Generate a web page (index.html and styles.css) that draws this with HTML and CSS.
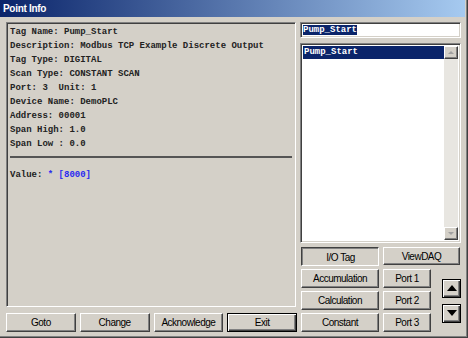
FILE: index.html
```html
<!DOCTYPE html>
<html lang="en">
  <head>
    <meta charset="UTF-8" />
    <title>Point Info</title>
    <link rel="stylesheet" href="styles.css">
  </head>
  <body>
    <div class="window">
      <div class="titlebar">Point Info</div>

      <div class="main">
        <div class="left">
          <div class="info sunken">
            <div class="line">Tag Name: Pump_Start</div>
            <div class="line">Description: Modbus TCP Example Discrete Output</div>
            <div class="line">Tag Type: DIGITAL</div>
            <div class="line">Scan Type: CONSTANT SCAN</div>
            <div class="line">Port: 3&nbsp; Unit: 1</div>
            <div class="line">Device Name: DemoPLC</div>
            <div class="line">Address: 00001</div>
            <div class="line">Span High: 1.0</div>
            <div class="line">Span Low : 0.0</div>
            <div class="rule"></div>
            <div class="line">Value: <span class="value">* [8000]</span></div>
          </div>

          <div class="actions">
            <button class="btn">Goto</button>
            <button class="btn">Change</button>
            <button class="btn">Acknowledge</button>
            <button class="btn default">Exit</button>
          </div>
        </div>

        <div class="right">
          <div class="field sunken"><span class="sel">Pump_Start</span></div>

          <div class="listbox sunken">
            <div class="items">
              <div class="item selected">Pump_Start</div>
            </div>
            <div class="scrollbar">
              <div class="sb-btn"><span class="tri up small"></span></div>
              <div class="sb-track"></div>
              <div class="sb-btn"><span class="tri down small"></span></div>
            </div>
          </div>

          <div class="controls">
            <button class="btn pressed">I/O Tag</button>
            <button class="btn wide">ViewDAQ</button>
            <button class="btn">Accumulation</button>
            <button class="btn">Port 1</button>
            <div class="arrows">
              <button class="btn arrow"><span class="tri up"></span></button>
              <button class="btn arrow"><span class="tri down"></span></button>
            </div>
            <button class="btn">Calculation</button>
            <button class="btn">Port 2</button>
            <button class="btn">Constant</button>
            <button class="btn">Port 3</button>
          </div>
        </div>
      </div>
    </div>
  </body>
</html>
```

FILE: styles.css
```css
:root {
  --face: #d4d0c8;
  --shadow: #808080;
  --dark: #404040;
  --navy: #0a246a;
}

body {
  margin: 0;
  background: var(--face);
}

.window {
  width: 468px;
  height: 338px;
  box-sizing: border-box;
  background: var(--face);
  border-right: 1px solid var(--dark);
  border-bottom: 1px solid var(--dark);
  box-shadow: inset -1px -1px var(--shadow);
  font-family: "Liberation Sans", Arial, sans-serif;
  font-size: 10px;
  letter-spacing: -0.5px;
  color: #000;
}

.titlebar {
  height: 17px;
  width: 465px;
  box-sizing: border-box;
  padding: 2px 0 0 3px;
  background: linear-gradient(to right, #0a246a, #a6caf0);
  color: #fff;
  font-weight: bold;
  font-size: 10px;
  letter-spacing: -0.3px;
  line-height: 13px;
}

.main {
  display: flex;
  gap: 3px;
  padding: 5px 0 0 6px;
}

.sunken {
  box-sizing: border-box;
  border: 1px solid;
  border-color: var(--shadow) #fff #fff var(--shadow);
  box-shadow: inset 1px 1px var(--dark), inset -1px -1px var(--face);
}

/* left side */
.left {
  width: 291px;
  display: flex;
  flex-direction: column;
  gap: 6px;
}

.info {
  width: 290px;
  height: 285px;
  padding: 2px 3px 0 3px;
  font-family: "Liberation Mono", "Courier New", monospace;
  font-size: 9px;
  font-weight: bold;
  letter-spacing: 0;
  color: #222;
}

.line {
  line-height: 14px;
  white-space: pre;
}

.rule {
  height: 0;
  border-top: 2px solid #555;
  margin: 5px 0 10px 0;
}

.value {
  color: #2a2af0;
}

.actions {
  display: grid;
  grid-template-columns: repeat(4, 1fr);
  gap: 4px;
  height: 20px;
}

/* buttons */
.btn {
  box-sizing: border-box;
  margin: 0;
  padding: 0;
  height: 19px;
  background: var(--face);
  font: inherit;
  letter-spacing: inherit;
  color: #000;
  border: 1px solid;
  border-color: #fff var(--dark) var(--dark) #fff;
  box-shadow: inset -1px -1px var(--shadow);
}

.btn.default {
  border: 1px solid #000;
  box-shadow: inset 1px 1px #fff, inset -1px -1px var(--dark), inset -2px -2px var(--shadow);
}

.btn.pressed {
  border-color: var(--dark) #fff #fff var(--dark);
  box-shadow: inset 1px 1px var(--shadow);
  padding: 2px 0 0 1px;
}

/* right side */
.right {
  width: 161px;
  display: flex;
  flex-direction: column;
}

.field {
  height: 16px;
  background: #fff;
  padding: 2px 0 0 2px;
  font-family: "Liberation Mono", "Courier New", monospace;
  font-size: 9px;
  font-weight: bold;
  letter-spacing: 0;
  line-height: 11px;
}

.sel {
  background: var(--navy);
  color: #fff;
}

.listbox {
  margin-top: 5px;
  height: 200px;
  background: #fff;
  display: flex;
  padding: 2px;
}

.items {
  flex: 1;
  font-family: "Liberation Mono", "Courier New", monospace;
  font-size: 9px;
  font-weight: bold;
  letter-spacing: 0;
}

.item {
  height: 13px;
  line-height: 13px;
  padding-left: 1px;
}

.item.selected {
  background: var(--navy);
  color: #fff;
}

.scrollbar {
  width: 14px;
  display: flex;
  flex-direction: column;
  background: #e8e6e1;
}

.sb-track {
  flex: 1;
}

.sb-btn {
  height: 13px;
  box-sizing: border-box;
  background: var(--face);
  border: 1px solid;
  border-color: #fff var(--dark) var(--dark) #fff;
  box-shadow: inset -1px -1px var(--shadow);
  display: flex;
  align-items: center;
  justify-content: center;
}

.tri {
  width: 0;
  height: 0;
  border-left: 5px solid transparent;
  border-right: 5px solid transparent;
}

.tri.up {
  border-bottom: 6px solid #000;
}

.tri.down {
  border-top: 6px solid #000;
}

.tri.small {
  border-left-width: 3px;
  border-right-width: 3px;
  border-bottom-width: 3px;
  border-top-width: 3px;
}

.tri.small.up {
  border-top: 0;
  border-bottom-color: #a0a0a0;
}

.tri.small.down {
  border-bottom: 0;
  border-top-color: #a0a0a0;
}

.controls {
  margin-top: 4px;
  padding-left: 1px;
  display: grid;
  grid-template-columns: 78px 48px 1fr;
  grid-template-rows: repeat(4, 19px);
  column-gap: 4px;
  row-gap: 3px;
}

.controls .wide {
  grid-column: 2 / 4;
  width: 77px;
  height: 18px;
}

.arrows {
  grid-column: 3;
  grid-row: 2 / 5;
  display: flex;
  flex-direction: column;
  justify-content: center;
  align-items: flex-end;
  gap: 6px;
}

.btn.arrow {
  width: 19px;
  height: 19px;
  border: 1px solid #000;
  box-shadow: inset 1px 1px #fff, inset -1px -1px var(--dark), inset -2px -2px var(--shadow);
  display: flex;
  align-items: center;
  justify-content: center;
}
```
